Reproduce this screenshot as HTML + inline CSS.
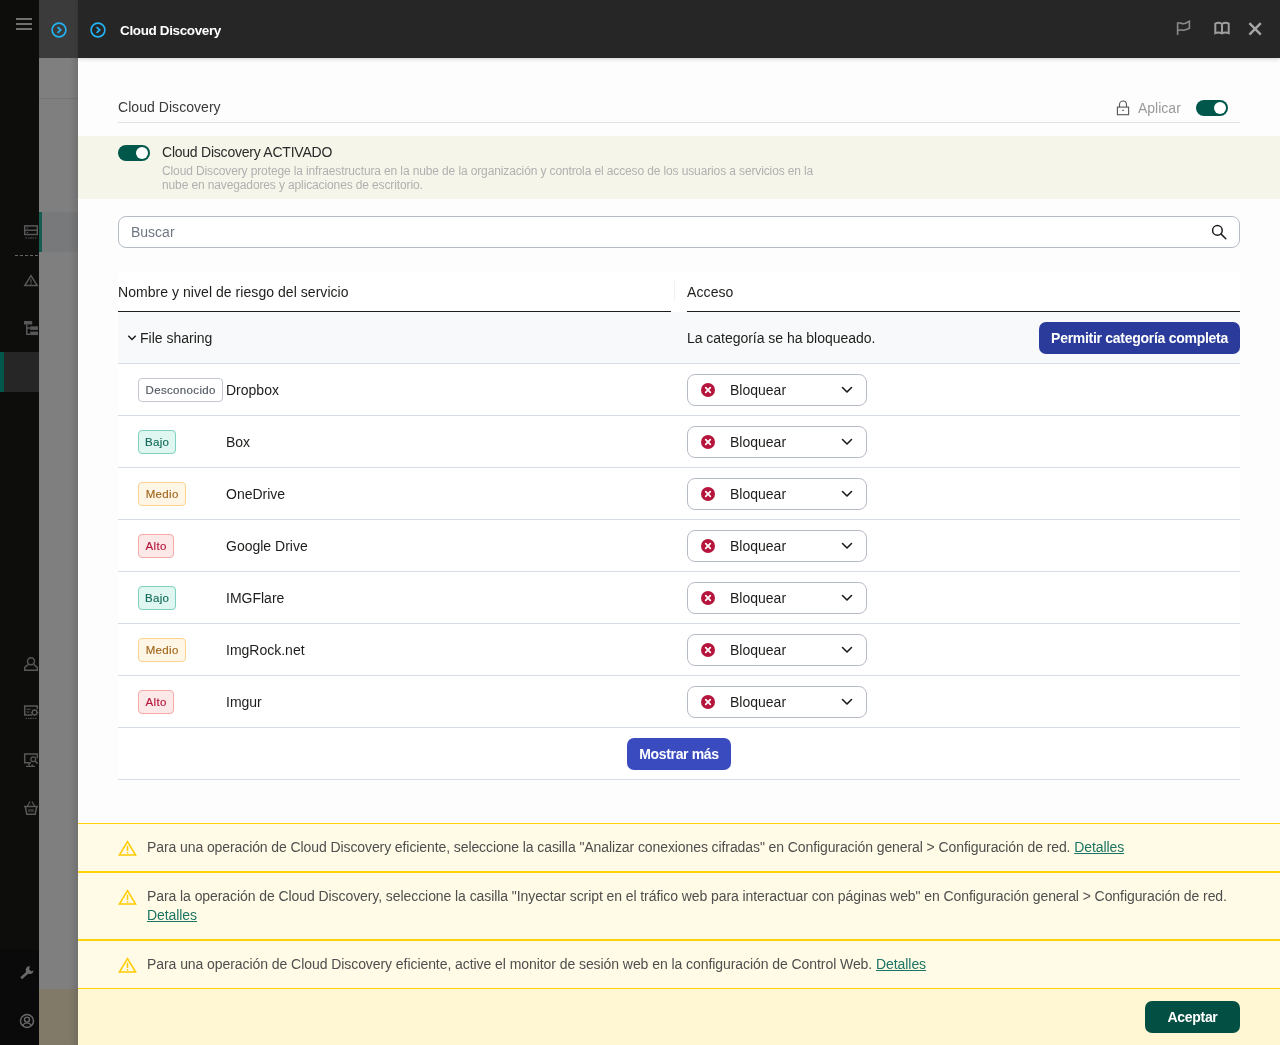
<!DOCTYPE html>
<html lang="es">
<head>
<meta charset="utf-8">
<title>Cloud Discovery</title>
<style>
*{box-sizing:border-box;margin:0;padding:0}
html,body{width:1280px;height:1045px;overflow:hidden;background:#7f7f7f;font-family:"Liberation Sans",sans-serif;font-size:14px;color:#1d1d1b}
.abs{position:absolute}
#side{position:absolute;left:0;top:0;width:39px;height:1045px;background:#0d0d0c}
#side .bot{position:absolute;left:0;top:949px;width:39px;height:96px;background:#0a0a0a}
#strip{position:absolute;left:39px;top:0;width:39px;height:1045px;background:#7f7f7f}
#strip .hd{position:absolute;left:0;top:0;width:39px;height:58px;background:#3b3b3b}
#strip .ln{position:absolute;left:0;top:98px;width:39px;height:1px;background:#747474}
#strip .sel{position:absolute;left:0;top:212px;width:39px;height:40px;background:#78797b}
#strip .ft{position:absolute;left:0;top:989px;width:39px;height:56px;background:#817a69}
#strip .sh{position:absolute;right:0;top:58px;width:9px;height:987px;background:linear-gradient(to right,rgba(0,0,0,0),rgba(0,0,0,.11))}
#head{position:absolute;left:78px;top:0;width:1202px;height:58px;background:#262626;z-index:5;box-shadow:0 1px 4px rgba(0,0,0,.18)}
#head .ttl{position:absolute;left:42px;top:21.5px;font-weight:bold;font-size:13.5px;line-height:17px;color:#fff;white-space:nowrap;letter-spacing:-.37px}
#panel{position:absolute;left:78px;top:58px;width:1202px;height:987px;background:#fdfdfd}
.t{position:absolute;white-space:nowrap;line-height:16px}
.tog{position:absolute;width:32px;height:16px;border-radius:8px;background:#00574a}
.tog:after{content:"";position:absolute;right:2px;top:2px;width:12px;height:12px;border-radius:6px;background:#fff}
#band{position:absolute;left:78px;top:136px;width:1202px;height:63px;background:#f6f5ea}
#search{position:absolute;left:118px;top:216px;width:1122px;height:32px;border:1px solid #b6bcc7;border-radius:8px;background:#fff}
#tbl{position:absolute;left:118px;top:271px;width:1122px;height:509px;background:#fff}
.hl{position:absolute;height:1px;background:#1d1d1b;top:311px}
.cat{position:absolute;left:118px;top:312px;width:1122px;height:51px;background:#f8f9fb}
.rb{position:absolute;left:118px;width:1122px;height:1px;background:#d6dde6}
.badge{position:absolute;height:24px;border:1px solid;border-radius:4px;font-size:11.5px;line-height:23px;letter-spacing:.35px;-webkit-text-stroke:.15px currentColor;text-align:center;white-space:nowrap;padding-left:.35px}
.b-unk{border-color:#c3c8d3;background:#fff;color:#525863}
.b-low{border-color:#7fd1bf;background:#e0f6f0;color:#126b5b}
.b-med{border-color:#fbd38d;background:#fff6e6;color:#a0651a}
.b-high{border-color:#f8a8a8;background:#fde8e8;color:#b5173b}
.nm{position:absolute;left:226px;white-space:nowrap;line-height:16px;font-size:14px;color:#1d1d1b}
.dd{position:absolute;left:687px;width:180px;height:32px;border:1px solid #b6bcc7;border-radius:8px;background:#fff}
.dd .x{position:absolute;left:13px;top:8px;width:14px;height:14px}
.dd .lb{position:absolute;left:42px;top:7px;line-height:16px;font-size:14px;color:#1d1d1b;white-space:nowrap}
.dd .cv{position:absolute;left:153px;top:11px;width:12px;height:8px}
.btn{position:absolute;height:32px;border-radius:7px;color:#fff;font-weight:bold;font-size:14px;line-height:32px;text-align:center;white-space:nowrap}
.warn{position:absolute;left:78px;width:1202px;background:#fffbe6;border-top:1px solid #ffd20a;border-bottom:1px solid #ffd20a}
.warn svg{position:absolute;left:40px;top:16px}
.warn .tx{position:absolute;left:69px;top:14px;font-size:14px;line-height:19px;color:#4e4e4e;white-space:nowrap}
.warn a{color:#1c7464;text-decoration:underline}
#foot{position:absolute;left:78px;top:989px;width:1202px;height:56px;background:#fff6d4}
</style>
</head>
<body>
<div id="root" style="position:absolute;left:0;top:0;width:1280px;height:1045px;will-change:transform">
<div id="side"><div class="bot"></div></div>
<div id="strip"><div class="hd"></div><div class="ln"></div><div class="sel"></div><div class="ft"></div><div class="sh"></div></div>
<div id="panel"></div>
<div id="head"><div class="ttl">Cloud Discovery</div></div>


<svg class="abs" style="left:16px;top:18px;z-index:6" width="16" height="12" viewBox="0 0 16 12"><path d="M0 1h16M0 6h16M0 11h16" stroke="#6f6f6f" stroke-width="2"/></svg>
<svg class="abs" style="left:51.5px;top:21.5px;margin:0 0 0 -.5px;z-index:6" width="16" height="16" viewBox="0 0 16 16"><circle cx="8" cy="8" r="6.9" fill="none" stroke="#22b4f5" stroke-width="1.6"/><path d="M6.6 5.2L9.7 8 6.6 10.8" fill="none" stroke="#22b4f5" stroke-width="1.7"/></svg>
<svg class="abs" style="left:90.5px;top:21.5px;margin:0 0 0 -.5px;z-index:6" width="16" height="16" viewBox="0 0 16 16"><circle cx="8" cy="8" r="6.9" fill="none" stroke="#22b4f5" stroke-width="1.6"/><path d="M6.6 5.2L9.7 8 6.6 10.8" fill="none" stroke="#22b4f5" stroke-width="1.7"/></svg>
<svg class="abs" style="left:1176px;top:20px;z-index:6" width="16" height="16" viewBox="0 0 16 16"><path d="M1.600 15V3C3.600 2.200 5.200 3.700 7.300 3.800S11.400 2.400 13.400 1.200V8.300C11.400 9.200 9.700 10.300 7.500 10.200S3.600 9.400 1.600 10.700" fill="none" stroke="#8a8a8a" stroke-width="1.6"/></svg>
<svg class="abs" style="left:1213px;top:21px;z-index:6" width="18" height="14" viewBox="0 0 18 14"><path d="M2.300 12.200V2.700C4.500 1.500 7 1.700 9 3C11 1.700 13.500 1.500 15.700 2.700V12.200C13.500 11.200 11 11.300 9 12.500C7 11.300 4.500 11.200 2.300 12.200ZM9 3V12.500" fill="none" stroke="#9e9e9e" stroke-width="2" stroke-linejoin="miter"/></svg>
<svg class="abs" style="left:1248px;top:22px;z-index:6" width="14" height="14" viewBox="0 0 14 14"><path d="M1.400 1.200L12.800 12.600M12.800 1.200L1.400 12.600" stroke="#a6a6a6" stroke-width="2.4"/></svg>

<div class="t" style="left:118px;top:99px;font-size:14px;letter-spacing:.05px;color:#3a3a3a">Cloud Discovery</div>
<div class="abs" style="left:118px;top:122px;width:1122px;height:1px;background:#e2e2e2"></div>
<div class="t" style="left:1138px;top:100px;font-size:14px;color:#9a9a9a">Aplicar</div>
<div class="tog" style="left:1196px;top:100px"></div>

<div id="band"></div>
<div class="tog" style="left:118px;top:145px"></div>
<div class="t" style="left:162px;top:144px;font-size:14px;letter-spacing:-.23px;color:#2a2a2a">Cloud Discovery ACTIVADO</div>
<div class="t" style="left:162px;top:164px;font-size:12px;line-height:14px;letter-spacing:-.125px;color:#b0b0b0">Cloud Discovery protege la infraestructura en la nube de la organización y controla el acceso de los usuarios a servicios en la<br>nube en navegadores y aplicaciones de escritorio.</div>

<div id="search"></div>
<div class="t" style="left:131px;top:224px;font-size:14px;color:#6f7683">Buscar</div>

<div id="tbl"></div>
<div class="t" style="left:118px;top:284px;font-size:14px;letter-spacing:.05px;color:#1d1d1b">Nombre y nivel de riesgo del servicio</div>
<div class="t" style="left:687px;top:284px;font-size:14px;letter-spacing:.1px;color:#1d1d1b">Acceso</div>
<div class="hl" style="left:118px;width:553px"></div>
<div class="hl" style="left:687px;width:553px"></div>
<div class="abs" style="left:674px;top:281px;width:1px;height:20px;background:#f1f1f1"></div>
<div class="cat"></div>
<div class="t" style="left:140px;top:330px;font-size:14px;color:#1d1d1b">File sharing</div>
<div class="t" style="left:687px;top:330px;font-size:14px;letter-spacing:-.03px;color:#1d1d1b">La categoría se ha bloqueado.</div>
<div class="btn" style="left:1039px;top:322px;width:201px;letter-spacing:-.28px;background:#2b3b9b">Permitir categoría completa</div>

<div class="rb" style="top:363px"></div>
<div class="rb" style="top:415px"></div>
<div class="rb" style="top:467px"></div>
<div class="rb" style="top:519px"></div>
<div class="rb" style="top:571px"></div>
<div class="rb" style="top:623px"></div>
<div class="rb" style="top:675px"></div>
<div class="rb" style="top:727px"></div>
<div class="rb" style="top:779px"></div>

<div class="badge b-unk" style="left:138px;top:378px;width:85px">Desconocido</div>
<div class="nm" style="top:382px">Dropbox</div>
<div class="dd" style="top:374px"><svg class="x" viewBox="0 0 14 14"><circle cx="7" cy="7" r="7" fill="#b5153c"/><path d="M4.7 4.7l4.6 4.6M9.3 4.7l-4.6 4.6" stroke="#fff" stroke-width="1.7" stroke-linecap="round"/></svg><div class="lb">Bloquear</div><svg class="cv" viewBox="0 0 12 8"><path d="M1.5 1.5L6 6l4.5-4.5" fill="none" stroke="#1d1d1b" stroke-width="1.6" stroke-linecap="round" stroke-linejoin="round"/></svg></div>
<div class="badge b-low" style="left:138px;top:430px;width:38px">Bajo</div>
<div class="nm" style="top:434px">Box</div>
<div class="dd" style="top:426px"><svg class="x" viewBox="0 0 14 14"><circle cx="7" cy="7" r="7" fill="#b5153c"/><path d="M4.7 4.7l4.6 4.6M9.3 4.7l-4.6 4.6" stroke="#fff" stroke-width="1.7" stroke-linecap="round"/></svg><div class="lb">Bloquear</div><svg class="cv" viewBox="0 0 12 8"><path d="M1.5 1.5L6 6l4.5-4.5" fill="none" stroke="#1d1d1b" stroke-width="1.6" stroke-linecap="round" stroke-linejoin="round"/></svg></div>
<div class="badge b-med" style="left:138px;top:482px;width:48px">Medio</div>
<div class="nm" style="top:486px">OneDrive</div>
<div class="dd" style="top:478px"><svg class="x" viewBox="0 0 14 14"><circle cx="7" cy="7" r="7" fill="#b5153c"/><path d="M4.7 4.7l4.6 4.6M9.3 4.7l-4.6 4.6" stroke="#fff" stroke-width="1.7" stroke-linecap="round"/></svg><div class="lb">Bloquear</div><svg class="cv" viewBox="0 0 12 8"><path d="M1.5 1.5L6 6l4.5-4.5" fill="none" stroke="#1d1d1b" stroke-width="1.6" stroke-linecap="round" stroke-linejoin="round"/></svg></div>
<div class="badge b-high" style="left:138px;top:534px;width:36px">Alto</div>
<div class="nm" style="top:538px">Google Drive</div>
<div class="dd" style="top:530px"><svg class="x" viewBox="0 0 14 14"><circle cx="7" cy="7" r="7" fill="#b5153c"/><path d="M4.7 4.7l4.6 4.6M9.3 4.7l-4.6 4.6" stroke="#fff" stroke-width="1.7" stroke-linecap="round"/></svg><div class="lb">Bloquear</div><svg class="cv" viewBox="0 0 12 8"><path d="M1.5 1.5L6 6l4.5-4.5" fill="none" stroke="#1d1d1b" stroke-width="1.6" stroke-linecap="round" stroke-linejoin="round"/></svg></div>
<div class="badge b-low" style="left:138px;top:586px;width:38px">Bajo</div>
<div class="nm" style="top:590px">IMGFlare</div>
<div class="dd" style="top:582px"><svg class="x" viewBox="0 0 14 14"><circle cx="7" cy="7" r="7" fill="#b5153c"/><path d="M4.7 4.7l4.6 4.6M9.3 4.7l-4.6 4.6" stroke="#fff" stroke-width="1.7" stroke-linecap="round"/></svg><div class="lb">Bloquear</div><svg class="cv" viewBox="0 0 12 8"><path d="M1.5 1.5L6 6l4.5-4.5" fill="none" stroke="#1d1d1b" stroke-width="1.6" stroke-linecap="round" stroke-linejoin="round"/></svg></div>
<div class="badge b-med" style="left:138px;top:638px;width:48px">Medio</div>
<div class="nm" style="top:642px">ImgRock.net</div>
<div class="dd" style="top:634px"><svg class="x" viewBox="0 0 14 14"><circle cx="7" cy="7" r="7" fill="#b5153c"/><path d="M4.7 4.7l4.6 4.6M9.3 4.7l-4.6 4.6" stroke="#fff" stroke-width="1.7" stroke-linecap="round"/></svg><div class="lb">Bloquear</div><svg class="cv" viewBox="0 0 12 8"><path d="M1.5 1.5L6 6l4.5-4.5" fill="none" stroke="#1d1d1b" stroke-width="1.6" stroke-linecap="round" stroke-linejoin="round"/></svg></div>
<div class="badge b-high" style="left:138px;top:690px;width:36px">Alto</div>
<div class="nm" style="top:694px">Imgur</div>
<div class="dd" style="top:686px"><svg class="x" viewBox="0 0 14 14"><circle cx="7" cy="7" r="7" fill="#b5153c"/><path d="M4.7 4.7l4.6 4.6M9.3 4.7l-4.6 4.6" stroke="#fff" stroke-width="1.7" stroke-linecap="round"/></svg><div class="lb">Bloquear</div><svg class="cv" viewBox="0 0 12 8"><path d="M1.5 1.5L6 6l4.5-4.5" fill="none" stroke="#1d1d1b" stroke-width="1.6" stroke-linecap="round" stroke-linejoin="round"/></svg></div>
<div class="btn" style="left:627px;top:738px;width:104px;letter-spacing:-.35px;background:#3a4bbf">Mostrar más</div>

<div class="warn" style="top:823px;height:49px"><svg width="19" height="17" viewBox="0 0 19 17"><path d="M9.5 1.7L17.6 15.1H1.400Z" fill="none" stroke="#ffca00" stroke-width="1.500" stroke-linejoin="miter"/><path d="M9.500 5.800v5.200" stroke="#ffca00" stroke-width="1.500"/><path d="M9.500 12v1.500" stroke="#ffca00" stroke-width="1.500"/></svg><div class="tx" id="w1" style="letter-spacing:-.092px">Para una operación de Cloud Discovery eficiente, seleccione la casilla "Analizar conexiones cifradas" en Configuración general &gt; Configuración de red. <a>Detalles</a></div></div>
<div class="warn" style="top:872px;height:68px"><svg width="19" height="17" viewBox="0 0 19 17"><path d="M9.5 1.7L17.6 15.1H1.400Z" fill="none" stroke="#ffca00" stroke-width="1.500" stroke-linejoin="miter"/><path d="M9.500 5.800v5.200" stroke="#ffca00" stroke-width="1.500"/><path d="M9.500 12v1.500" stroke="#ffca00" stroke-width="1.500"/></svg><div class="tx" id="w2" style="letter-spacing:-.076px">Para la operación de Cloud Discovery, seleccione la casilla "Inyectar script en el tráfico web para interactuar con páginas web" en Configuración general &gt; Configuración de red.<br><a>Detalles</a></div></div>
<div class="warn" style="top:940px;height:49px"><svg width="19" height="17" viewBox="0 0 19 17"><path d="M9.5 1.7L17.6 15.1H1.400Z" fill="none" stroke="#ffca00" stroke-width="1.500" stroke-linejoin="miter"/><path d="M9.500 5.800v5.200" stroke="#ffca00" stroke-width="1.500"/><path d="M9.500 12v1.500" stroke="#ffca00" stroke-width="1.500"/></svg><div class="tx" id="w3" style="letter-spacing:-.066px">Para una operación de Cloud Discovery eficiente, active el monitor de sesión web en la configuración de Control Web. <a>Detalles</a></div></div>
<div id="foot"></div>
<div class="btn" style="left:1145px;top:1001px;width:95px;letter-spacing:-.3px;background:#044f43">Aceptar</div>
<svg class="abs" style="left:1116px;top:100px" width="14" height="16" viewBox="0 0 14 16"><rect x="1.400" y="7.100" width="11.200" height="7.600" fill="none" stroke="#555" stroke-width="1.1"/><path d="M3.500 7V4.500a3.500 3.500 0 0 1 7 0V7" fill="none" stroke="#555" stroke-width="1.1"/><path d="M6.300 10.400h1.500" stroke="#555" stroke-width="1.100"/></svg>
<svg class="abs" style="left:1210px;top:223px" width="18" height="18" viewBox="0 0 18 18"><circle cx="7.400" cy="7.400" r="4.800" fill="none" stroke="#1d1d1b" stroke-width="1.500"/><path d="M10.900 10.900L15.800 15.700" stroke="#1d1d1b" stroke-width="1.500" stroke-linecap="round"/></svg>
<svg class="abs" style="left:127px;top:334px" width="10" height="8" viewBox="0 0 10 8"><path d="M1.300 1.800L5 5.500 8.700 1.800" fill="none" stroke="#1d1d1b" stroke-width="1.500"/></svg>

<div class="abs" style="left:0;top:352px;width:39px;height:40px;background:#262626"></div>
<div class="abs" style="left:0;top:352px;width:4px;height:40px;background:#00574a"></div>
<div class="abs" style="left:39px;top:212px;width:3px;height:40px;background:#165c50"></div>
<svg class="abs" style="left:15px;top:255px" width="24" height="1" viewBox="0 0 24 1"><path d="M0 .5h24" stroke="#666" stroke-width="1" stroke-dasharray="3 2"/></svg>
<svg class="abs" style="left:23px;top:224px" width="16" height="16" viewBox="0 0 16 16"><rect x="1.700" y="1.900" width="12.600" height="8.600" fill="none" stroke="#585858" stroke-width="1.500"/><path d="M1.700 6.200h12.600" stroke="#585858" stroke-width="1.400"/><path d="M3.800 4h1.400M3.800 8.400h1.400" stroke="#585858" stroke-width="1"/><path d="M2.500 14h4M9.500 14h4" stroke="#585858" stroke-width="1" stroke-dasharray="1.500 1"/><rect x="7.300" y="13.300" width="1.400" height="1.400" fill="#585858"/></svg>
<svg class="abs" style="left:23px;top:273px" width="16" height="14" viewBox="0 0 16 14"><path d="M8 2.600L14.200 12.600H1.800Z" fill="none" stroke="#585858" stroke-width="1.500"/><path d="M8 6.200v3.200M8 10.300v1.100" stroke="#585858" stroke-width="1.200"/></svg>
<svg class="abs" style="left:23px;top:320px" width="16" height="16" viewBox="0 0 16 16"><rect x="1" y="1" width="8.200" height="3.500" fill="#585858"/><rect x="7.200" y="6.300" width="7.800" height="3.600" fill="#585858"/><rect x="7.200" y="11.600" width="7.800" height="3.500" fill="#585858"/><path d="M3.800 4.500V14.300H7.200M3.800 8.100H7.200" fill="none" stroke="#585858" stroke-width="1.500"/></svg>
<svg class="abs" style="left:23px;top:656px" width="16" height="16" viewBox="0 0 16 16"><circle cx="8" cy="5.200" r="3.500" fill="none" stroke="#585858" stroke-width="1.500"/><path d="M5.500 8.300L1.700 11.300V14.200H14.300V11.300L10.500 8.300" fill="none" stroke="#585858" stroke-width="1.500"/></svg>
<svg class="abs" style="left:23px;top:704px" width="16" height="16" viewBox="0 0 16 16"><path d="M9 11H1.700V2.100H14.300V5" fill="none" stroke="#585858" stroke-width="1.500"/><path d="M3.500 5.300h4M3.500 8h3" stroke="#585858" stroke-width="1.100"/><circle cx="11.600" cy="8.600" r="2.400" fill="none" stroke="#585858" stroke-width="1.300"/><path d="M11.600 4.900v1.300M11.600 11v1.300M7.900 8.600h1.300M14 8.600h1.300M9 6l.9.900M13.300 10.300l.9.900M14.200 6l-.9.900M9.900 10.300l-.9.900" stroke="#585858" stroke-width="1.100"/><path d="M2.500 14.400h4M9.500 14.400h4" stroke="#585858" stroke-width="1" stroke-dasharray="1.500 1"/><rect x="7.300" y="13.700" width="1.400" height="1.400" fill="#585858"/></svg>
<svg class="abs" style="left:23px;top:752px" width="16" height="16" viewBox="0 0 16 16"><path d="M8 10.700H1.700V2.100H14.300V6" fill="none" stroke="#585858" stroke-width="1.500"/><path d="M3 14.300h9M6 11v3M8.800 12.500l1.200 1.800" stroke="#585858" stroke-width="1.300"/><circle cx="10.300" cy="7.300" r="2.400" fill="none" stroke="#585858" stroke-width="1.300"/><path d="M12 9l2.600 2.600" stroke="#585858" stroke-width="1.500"/></svg>
<svg class="abs" style="left:23px;top:800px" width="16" height="16" viewBox="0 0 16 16"><path d="M1 6.500H15M2.300 6.700L3.800 14.200H12.200L13.700 6.700" fill="none" stroke="#585858" stroke-width="1.500"/><path d="M4.500 6L7 1.500M11.500 6L9 1.500" stroke="#585858" stroke-width="1.200"/><path d="M6 9.300v2.400M8 9.300v2.400M10 9.300v2.400" stroke="#585858" stroke-width="1.200"/></svg>
<svg class="abs" style="left:19px;top:965px" width="16" height="16" viewBox="0 0 16 16"><path d="M2.200 13.200L8.800 7.200" stroke="#6a6a6a" stroke-width="2.600" stroke-linecap="butt"/><path d="M10.900 1.300A3.900 3.900 0 1 0 14.500 5.600L12.300 6.300 10.200 4.400Z" fill="#6a6a6a"/></svg>
<svg class="abs" style="left:19px;top:1013px" width="16" height="16" viewBox="0 0 16 16"><circle cx="8" cy="8" r="6.500" fill="none" stroke="#6a6a6a" stroke-width="1.400"/><circle cx="8" cy="6.600" r="2.500" fill="none" stroke="#6a6a6a" stroke-width="1.400"/><path d="M3.600 12.600C5 10.300 6.500 9.900 8 9.900S11 10.300 12.400 12.600" fill="none" stroke="#6a6a6a" stroke-width="1.400"/></svg>
</div>
</body>
</html>
